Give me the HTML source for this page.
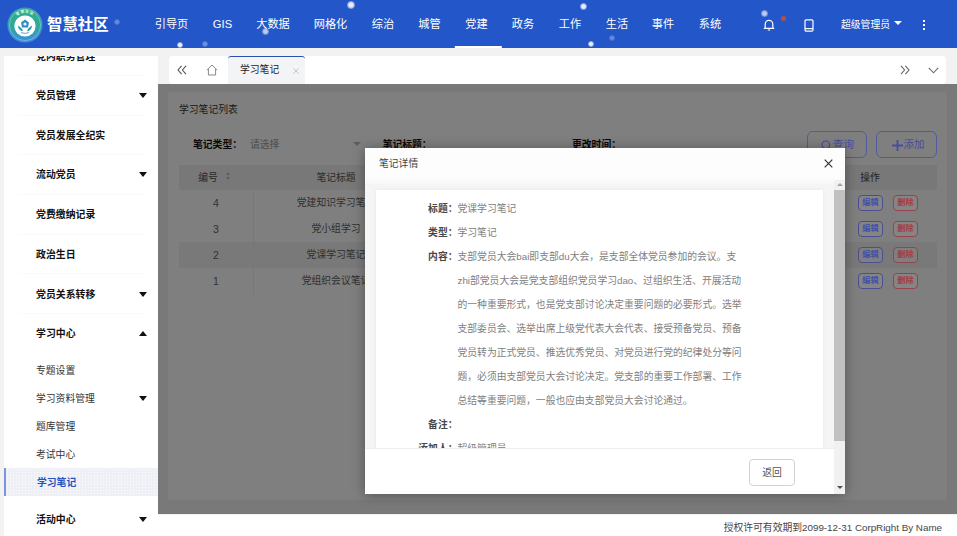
<!DOCTYPE html>
<html lang="zh-CN">
<head>
<meta charset="utf-8">
<title>智慧社区</title>
<style>
*{box-sizing:border-box;margin:0;padding:0}
html,body{width:957px;height:536px;overflow:hidden}
body{position:relative;background:#f2f2f2;font-family:"Liberation Sans","Noto Sans CJK SC",sans-serif;font-size:9.8px;color:#333}
.abs{position:absolute}
/* header */
#hdr{position:absolute;left:0;top:0;width:957px;height:48px;background:#2356c8;color:#fff}
#hdr .title{position:absolute;left:47px;top:10px;font-size:15.4px;font-weight:bold;line-height:30px;white-space:nowrap}
#hdr .nav{position:absolute;top:0;height:48px;line-height:48px;font-size:11.2px;white-space:nowrap;transform:translateX(-50%)}
#hdr .nav.act:after{content:"";position:absolute;left:-11px;right:-14.5px;bottom:0;height:2.3px;background:#fff}
.snow{position:absolute;border-radius:50%;background:radial-gradient(circle,#fff 35%,rgba(255,255,255,.35) 70%,rgba(255,255,255,0) 100%);opacity:.9}
/* sidebar */
#side{position:absolute;left:4px;top:56px;width:154px;height:480px;background:#fff;overflow:hidden}
#side .m{position:absolute;left:32px;font-weight:bold;font-size:9.9px;line-height:14px;color:#111;white-space:nowrap}
#side .s{position:absolute;left:32px;font-size:9.8px;line-height:14px;color:#333;white-space:nowrap}
.car{position:absolute;left:135.1px;width:0;height:0;border-left:4.2px solid transparent;border-right:4.2px solid transparent}
.car.d{border-top:5px solid #111}
.car.u{border-bottom:5px solid #111}
#side .actbg{position:absolute;left:0;top:412px;width:154px;height:28px;background-color:#eef0f6;background-image:radial-gradient(circle,#fbfcfe 0.6px,transparent 0.9px);background-size:3px 3px;border-left:2px solid #7896e0}
/* tab bar */
#tabs{position:absolute;left:169px;top:56px;width:777px;height:28px;background:#fff;border-radius:4px}
#tabs .tab{position:absolute;left:59px;top:0;width:77px;height:28px;background:#f3f4f6;border-top:1.5px solid #2b4fb0;border-radius:3px 3px 0 0}
#tabs .tab span{position:absolute;left:12px;top:6px;font-size:9.8px;line-height:14px;color:#222}
/* content */
#card{position:absolute;left:168px;top:92px;width:779px;height:408px;background:#fff;border-radius:3px}
#card .ttl{position:absolute;left:11px;top:10.7px;font-size:9.8px;line-height:14px;color:#333}
.lbl{position:absolute;font-weight:bold;font-size:9.8px;line-height:14px;color:#111;white-space:nowrap}
.btn{position:absolute;top:131px;height:27px;border:1px solid #555a9e;border-radius:6px;color:#464d9c;font-size:10.5px;line-height:25px;text-align:center;white-space:nowrap}
#thead{position:absolute;left:11px;top:73px;width:758px;height:25px;background:#f0f0f0}
.row{position:absolute;left:11px;width:758px;height:26px}
.cell{position:absolute;font-size:9.8px;line-height:14px;color:#606060;white-space:nowrap;transform:translateX(-50%)}
.ob{position:absolute;width:25px;height:15.5px;border-radius:4px;font-size:8.2px;font-weight:bold;line-height:13px;text-align:center;white-space:nowrap}
.ob.e{border:1px solid #494f92;color:#4450a6;left:858px;background:rgba(255,255,255,.05)}
.ob.x{border:1px solid #96444c;color:#a63a42;left:893px;background:rgba(255,255,255,.05)}
#shade{position:absolute;left:158px;top:83.8px;width:799px;height:430.7px;background:rgba(0,0,0,.5)}
/* footer */
#foot{position:absolute;left:158px;top:514.5px;width:799px;height:22px;background:#fff;font-size:9.8px;line-height:26.5px;color:#444;text-align:right;padding-right:15px;white-space:nowrap}
/* modal */
#modal{position:absolute;left:365px;top:148px;width:480px;height:346px;background:#f5f5f5;box-shadow:0 1px 12px rgba(0,0,0,.35);overflow:hidden}
#modal .mh{position:absolute;left:0;top:0;width:480px;height:35.5px;background:linear-gradient(#fdfdfd 80%,#f7f7f7)}
#modal .mh span{position:absolute;left:14px;top:8.7px;font-size:9.8px;line-height:14px;color:#444}
#modal .mc{position:absolute;left:11px;top:42px;width:447px;height:320px;background:#fff;box-shadow:0 0 4px rgba(0,0,0,.06)}
#modal .k{position:absolute;width:81.5px;left:0;text-align:right;font-weight:bold;font-size:9.8px;line-height:14px;color:#484848;white-space:nowrap}
#modal .v{position:absolute;left:81.5px;font-size:9.8px;line-height:14px;color:#808080;white-space:nowrap}
#modal .mf{position:absolute;left:0;top:300px;width:469px;height:46px;background:#fff;border-top:1px solid #eee}
#modal .back{position:absolute;left:384px;top:10px;width:46px;height:27px;border:1px solid #d2d2d2;border-radius:4px;background:#fff;font-size:9.8px;line-height:25px;text-align:center;color:#555}
#modal .sb{position:absolute;left:469px;top:32px;width:11px;height:314px;background:#f1f1f1}
#modal .sb .th{position:absolute;left:0;top:10px;width:11px;height:251px;background:#c1c1c1}
</style>
</head>
<body>

<div id="hdr">
  <svg class="abs" style="left:7px;top:7px" width="36" height="36" viewBox="0 0 36 36">
    <defs><linearGradient id="lg" x1="0" y1="0" x2="0" y2="1"><stop offset="0" stop-color="#2fb083"/><stop offset="0.55" stop-color="#2fa7a0"/><stop offset="1" stop-color="#3a8fe0"/></linearGradient></defs>
    <circle cx="18" cy="18" r="17.6" fill="#6fb6e8" opacity=".55"/>
    <circle cx="18" cy="18" r="16.8" fill="url(#lg)"/>
    <circle cx="18" cy="18" r="15.6" fill="none" stroke="#d8f0ee" stroke-width=".5" opacity=".7"/>
    <circle cx="18" cy="19" r="10.6" fill="#fff"/>
    <path d="M18 12.4 L22 15.4 L21 20.4 H15 L14 15.4 Z" fill="#2f8fc0"/>
    <circle cx="18" cy="17" r="1.6" fill="#e8f6ff"/>
    <path d="M10.8 18.5 q0.6 5 5.2 5.8 q-1 -3.6 -5.2 -5.8z M25.2 18.5 q-0.6 5 -5.2 5.8 q1 -3.6 5.2 -5.8z" fill="#2c9aa8"/>
    <path d="M14 25.6 q4 1.6 8 0" stroke="#3a8fd0" stroke-width=".8" fill="none"/>
    <path id="arc" d="M5.6 18 A12.4 12.4 0 0 1 30.4 18" fill="none"/><text font-size="3.6" fill="#e6fff6" font-family="'Liberation Sans','Noto Sans CJK SC',sans-serif" font-weight="bold" letter-spacing=".8"><textPath href="#arc" startOffset="50%" text-anchor="middle">智慧社区</textPath></text>
  </svg>
  <div class="title">智慧社区</div>
  <div class="nav" style="left:171.5px">引导页</div>
  <div class="nav" style="left:222.5px">GIS</div>
  <div class="nav" style="left:273px">大数据</div>
  <div class="nav" style="left:330.5px">网格化</div>
  <div class="nav" style="left:383px">综治</div>
  <div class="nav" style="left:429.5px">城管</div>
  <div class="nav act" style="left:476.5px">党建</div>
  <div class="nav" style="left:523px">政务</div>
  <div class="nav" style="left:570px">工作</div>
  <div class="nav" style="left:617px">生活</div>
  <div class="nav" style="left:663px">事件</div>
  <div class="nav" style="left:710px">系统</div>
  <!-- bell -->
  <svg class="abs" style="left:763px;top:17.7px" width="12" height="14" viewBox="0 0 12 14" fill="none" stroke="#fff" stroke-width="1.2">
    <path d="M2.2 10 V6.2 a3.8 3.8 0 0 1 7.6 0 V10 M0.8 10.3 H11.2 M4.8 12 H7.2"/>
  </svg>
  <div class="abs" style="left:781px;top:16px;width:5px;height:5px;border-radius:50%;background:#b5503f"></div>
  <!-- phone -->
  <svg class="abs" style="left:803.5px;top:18.5px" width="10" height="13" viewBox="0 0 10 13" fill="none" stroke="#fff" stroke-width="1.2">
    <rect x="1" y="0.8" width="8" height="11.4" rx="1.2"/><path d="M1 9.6 H9"/>
  </svg>
  <div class="abs" style="left:841px;top:18px;font-size:9.8px;line-height:14px;white-space:nowrap">超级管理员</div>
  <div class="abs" style="left:894px;top:21px;width:0;height:0;border-left:4px solid transparent;border-right:4px solid transparent;border-top:4.5px solid #fff"></div>
  <div class="abs" style="left:923px;top:20px;width:2px;height:2px;background:#fff;box-shadow:0 4px 0 #fff,0 8px 0 #fff"></div>
  <!-- snow -->
  <div class="snow" style="left:346.5px;top:0.5px;width:8.5px;height:8.5px"></div>
  <div class="snow" style="left:262px;top:28px;width:7px;height:7px;opacity:.7"></div>
  <div class="snow" style="left:177px;top:42px;width:6px;height:6px"></div>
  <div class="snow" style="left:580px;top:3px;width:7px;height:7px"></div>
  <div class="snow" style="left:588px;top:41px;width:6px;height:6px"></div>
  <div class="snow" style="left:761px;top:10px;width:7px;height:7px;opacity:.7"></div>
  <div class="snow" style="left:202px;top:41px;width:6px;height:6px;opacity:.35"></div>
  <div class="snow" style="left:114px;top:19px;width:6px;height:6px;opacity:.3"></div>
  <div class="snow" style="left:609px;top:35px;width:6px;height:6px;opacity:.3"></div>
</div>

<div id="side">
  <div class="abs" style="left:14px;top:19.0px;width:126px;height:1px;background:#fafafa"></div><div class="abs" style="left:14px;top:58.7px;width:126px;height:1px;background:#fafafa"></div><div class="abs" style="left:14px;top:98.4px;width:126px;height:1px;background:#fafafa"></div><div class="abs" style="left:14px;top:138.0px;width:126px;height:1px;background:#fafafa"></div><div class="abs" style="left:14px;top:177.7px;width:126px;height:1px;background:#fafafa"></div><div class="abs" style="left:14px;top:217.4px;width:126px;height:1px;background:#fafafa"></div><div class="abs" style="left:14px;top:257.0px;width:126px;height:1px;background:#fafafa"></div>
  <div class="m" style="top:-6px">党内职务管理</div>
  <div class="m" style="top:33px">党员管理</div><div class="car d" style="top:36.8px"></div>
  <div class="m" style="top:73px">党员发展全纪实</div>
  <div class="m" style="top:112px">流动党员</div><div class="car d" style="top:115.8px"></div>
  <div class="m" style="top:152px">党费缴纳记录</div>
  <div class="m" style="top:192px">政治生日</div>
  <div class="m" style="top:232px">党员关系转移</div><div class="car d" style="top:235.8px"></div>
  <div class="m" style="top:271px">学习中心</div><div class="car u" style="top:274.5px"></div>
  <div class="s" style="top:308px">专题设置</div>
  <div class="s" style="top:336px">学习资料管理</div><div class="car d" style="top:339.8px"></div>
  <div class="s" style="top:364px">题库管理</div>
  <div class="s" style="top:392px">考试中心</div>
  <div class="actbg"></div>
  <div class="s" style="top:420px;color:#2452c0;font-weight:bold;left:33px">学习笔记</div>
  <div class="m" style="top:457px">活动中心</div><div class="car d" style="top:460.8px"></div>
</div>

<div id="tabs">
  <svg class="abs" style="left:8px;top:9px" width="10" height="10" viewBox="0 0 10 10" fill="none" stroke="#555" stroke-width="1.1"><path d="M4.6 0.8 L1 5 L4.6 9.2 M9 0.8 L5.4 5 L9 9.2"/></svg>
  <svg class="abs" style="left:37px;top:8px" width="12" height="12" viewBox="0 0 12 12" fill="none" stroke="#888" stroke-width="1"><path d="M0.8 6 L6 1 L11.2 6 M2.4 5 V11 H9.6 V5"/></svg>
  <div class="tab"><span>学习笔记</span>
    <svg class="abs" style="left:64.5px;top:10.5px" width="6" height="6" viewBox="0 0 6 6" stroke="#c4c4c4" stroke-width="1"><path d="M0.5 0.5 L5.5 5.5 M5.5 0.5 L0.5 5.5"/></svg>
  </div>
  <svg class="abs" style="left:731px;top:9px" width="10" height="10" viewBox="0 0 10 10" fill="none" stroke="#666" stroke-width="1.1"><path d="M1 0.8 L4.6 5 L1 9.2 M5.4 0.8 L9 5 L5.4 9.2"/></svg>
  <svg class="abs" style="left:759px;top:11px" width="11" height="7" viewBox="0 0 11 7" fill="none" stroke="#666" stroke-width="1.1"><path d="M0.8 0.8 L5.5 5.8 L10.2 0.8"/></svg>
</div>

<div id="card">
  <div class="ttl">学习笔记列表</div>
  <div class="lbl" style="left:25px;top:45.5px">笔记类型：</div>
  <div class="abs" style="left:82px;top:46px;font-size:9.8px;line-height:14px;color:#999">请选择</div>
  <div class="abs" style="left:185px;top:50px;width:0;height:0;border-left:4px solid transparent;border-right:4px solid transparent;border-top:4.5px solid #bbb"></div>
  <div class="lbl" style="left:214.7px;top:45.5px">笔记标题：</div>
  <div class="lbl" style="left:404px;top:45.5px">更改时间：</div>
  <div id="thead">
    <div class="cell" style="left:29px;top:6px;color:#555">编号</div>
    <div class="abs" style="left:47px;top:7px;width:0;height:0;border-left:2.5px solid transparent;border-right:2.5px solid transparent;border-bottom:3.5px solid #bbb"></div>
    <div class="abs" style="left:47px;top:12px;width:0;height:0;border-left:2.5px solid transparent;border-right:2.5px solid transparent;border-top:3.5px solid #bbb"></div>
    <div class="cell" style="left:157px;top:6px;color:#555">笔记标题</div>
    <div class="cell" style="left:691px;top:6px;color:#444">操作</div>
  </div>
  <div class="row" style="top:98px"><div class="cell" style="left:37px;top:6px;font-size:10.5px;color:#666">4</div><div class="cell" style="left:157px;top:6px">党建知识学习笔记</div></div>
  <div class="row" style="top:124px"><div class="cell" style="left:37px;top:6px;font-size:10.5px;color:#666">3</div><div class="cell" style="left:157px;top:6px">党小组学习</div></div>
  <div class="row" style="top:150px;background:#f2f2f2"><div class="cell" style="left:37px;top:6px;font-size:10.5px;color:#666">2</div><div class="cell" style="left:157px;top:6px">党课学习笔记</div></div>
  <div class="row" style="top:176px"><div class="cell" style="left:37px;top:6px;font-size:10.5px;color:#666">1</div><div class="cell" style="left:157px;top:6px">党组织会议笔记</div></div>
  <div class="abs" style="left:85px;top:98px;width:1px;height:104px;background:#eee"></div>
</div>

<div id="shade"></div>

<div id="ops">
  <div class="btn" style="left:807px;width:60px"><svg style="position:absolute;left:13px;top:7.5px" width="11" height="11" viewBox="0 0 11 11" fill="none" stroke="#464d9c" stroke-width="1.2"><circle cx="4.8" cy="4.8" r="3.8"/><path d="M7.6 7.6 L10.3 10.3"/></svg><span style="position:absolute;left:25px;top:0">查询</span></div>
  <div class="btn" style="left:876px;width:61px"><svg style="position:absolute;left:15px;top:7.5px" width="11" height="11" viewBox="0 0 11 11" stroke="#464d9c" stroke-width="1.8"><path d="M5.5 0 V11 M0 5.5 H11"/></svg><span style="position:absolute;left:26.5px;top:0">添加</span></div>
  <div class="ob e" style="top:195.1px">编辑</div><div class="ob x" style="top:195.1px">删除</div>
  <div class="ob e" style="top:221.1px">编辑</div><div class="ob x" style="top:221.1px">删除</div>
  <div class="ob e" style="top:247.1px">编辑</div><div class="ob x" style="top:247.1px">删除</div>
  <div class="ob e" style="top:273.1px">编辑</div><div class="ob x" style="top:273.1px">删除</div>
</div>

<div id="foot">授权许可有效期到2099-12-31 CorpRight By Name</div>

<div id="modal">
  <div class="mh"><span>笔记详情</span>
    <svg class="abs" style="left:459px;top:11px" width="9" height="9" viewBox="0 0 9 9" stroke="#333" stroke-width="1.2"><path d="M0.7 0.7 L8.3 8.3 M8.3 0.7 L0.7 8.3"/></svg>
  </div>
  <div class="mc">
    <div class="k" style="top:12px">标题：</div><div class="v" style="top:12px">党课学习笔记</div>
    <div class="k" style="top:36px">类型：</div><div class="v" style="top:36px">学习笔记</div>
    <div class="k" style="top:60px">内容：</div>
    <div class="v" style="top:60px">支部党员大会bai即支部du大会，是支部全体党员参加的会议。支</div>
    <div class="v" style="top:84px">zhi部党员大会是党支部组织党员学习dao、过组织生活、开展活动</div>
    <div class="v" style="top:108px">的一种重要形式，也是党支部讨论决定重要问题的必要形式。选举</div>
    <div class="v" style="top:132px">支部委员会、选举出席上级党代表大会代表、接受预备党员、预备</div>
    <div class="v" style="top:156px">党员转为正式党员、推选优秀党员、对党员进行党的纪律处分等问</div>
    <div class="v" style="top:180px">题，必须由支部党员大会讨论决定。党支部的重要工作部署、工作</div>
    <div class="v" style="top:204px">总结等重要问题，一般也应由支部党员大会讨论通过。</div>
    <div class="k" style="top:228px">备注：</div>
    <div class="k" style="top:252px">添加人：</div><div class="v" style="top:252px">超级管理员</div>
  </div>
  <div class="mf"><div class="back">返回</div></div>
  <div class="sb"><div class="th"></div>
    <div class="abs" style="left:2.5px;top:3px;width:0;height:0;border-left:3px solid transparent;border-right:3px solid transparent;border-bottom:3.5px solid #a3a3a3"></div>
    <div class="abs" style="left:2.5px;top:306px;width:0;height:0;border-left:3px solid transparent;border-right:3px solid transparent;border-top:3.5px solid #505050"></div>
  </div>
</div>

</body>
</html>
